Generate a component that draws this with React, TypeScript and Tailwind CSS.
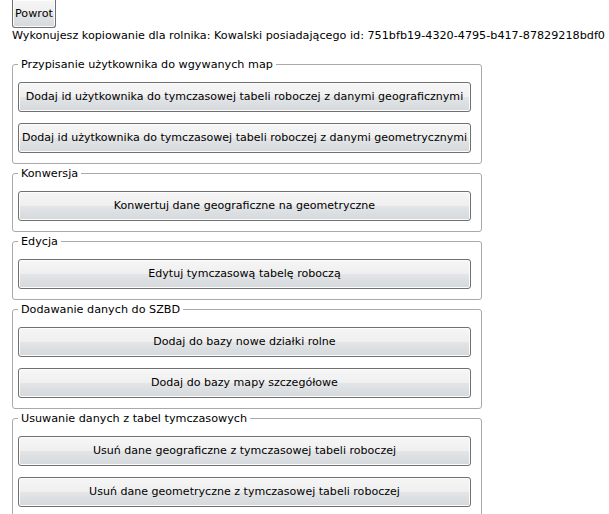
import React from "react";

const btn =
  "block w-[453px] h-[30px] ml-[5px] rounded-[3px] border border-[#707070] bg-[linear-gradient(to_bottom,#f6f6f6_0%,#efefef_50%,#e3e5e7_50%,#d5d9dc_100%)] shadow-[inset_0_0_0_1px_#fcfcfc] text-black text-[11.05px] leading-[14px] text-center whitespace-nowrap";

function Group({ title, items }: { title: string; items: string[] }) {
  return (
    <fieldset className="ml-[12px] w-[470px] border border-[#a9a9a9] rounded-[3px] pb-[10px] mb-[2px]">
      <legend className="ml-[5px] px-[3px] text-[11.2px] leading-[15px] text-black">{title}</legend>
      <div className="flex flex-col gap-[11px] pt-[10px]">
        {items.map((t) => (
          <button key={t} className={btn}>
            {t}
          </button>
        ))}
      </div>
    </fieldset>
  );
}

export default function App() {
  return (
    <div className="w-[609px] h-[514px] overflow-hidden bg-white text-black font-['DejaVu_Sans',_Verdana,_sans-serif] text-[11.2px]">
      <button className="block ml-[12px] h-[28px] px-[2px] rounded-b-[3px] border border-t-0 border-[#707070] bg-[linear-gradient(to_bottom,#f6f6f6_0%,#efefef_50%,#e3e5e7_50%,#d5d9dc_100%)] shadow-[inset_0_0_0_1px_#fcfcfc] text-[11.2px] leading-[14px]">
        Powrot
      </button>
      <div className="ml-[12px] h-[16px] leading-[16px] whitespace-nowrap">
        Wykonujesz kopiowanie dla rolnika: Kowalski posiadającego id: 751bfb19-4320-4795-b417-87829218bdf0
      </div>
      <div className="h-[13px]" />
      <Group
        title="Przypisanie użytkownika do wgywanych map"
        items={[
          "Dodaj id użytkownika do tymczasowej tabeli roboczej z danymi geograficznymi",
          "Dodaj id użytkownika do tymczasowej tabeli roboczej z danymi geometrycznymi",
        ]}
      />
      <Group title="Konwersja" items={["Konwertuj dane geograficzne na geometryczne"]} />
      <Group title="Edycja" items={["Edytuj tymczasową tabelę roboczą"]} />
      <Group
        title="Dodawanie danych do SZBD"
        items={["Dodaj do bazy nowe działki rolne", "Dodaj do bazy mapy szczegółowe"]}
      />
      <Group
        title="Usuwanie danych z tabel tymczasowych"
        items={[
          "Usuń dane geograficzne z tymczasowej tabeli roboczej",
          "Usuń dane geometryczne z tymczasowej tabeli roboczej",
        ]}
      />
    </div>
  );
}
